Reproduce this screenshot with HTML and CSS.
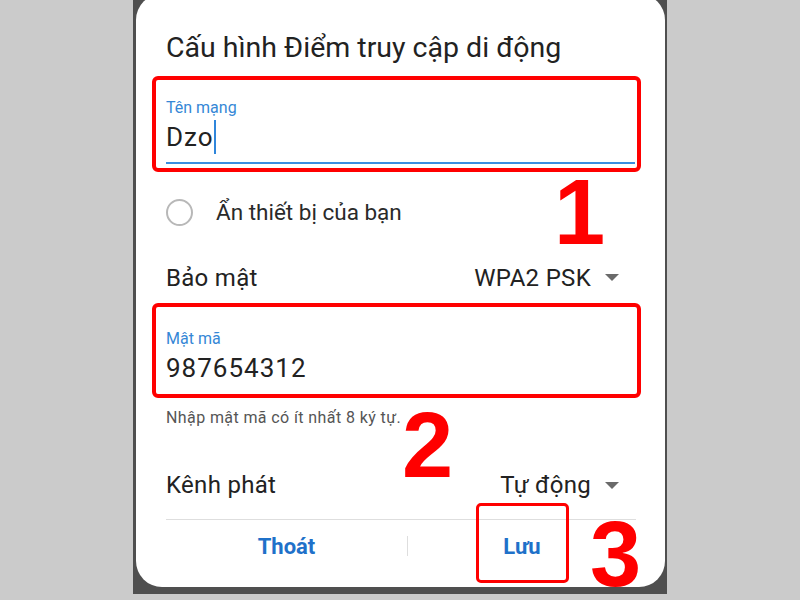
FILE: index.html
```html
<!DOCTYPE html>
<html lang="vi">
<head>
    <meta charset="UTF-8">
    <meta name="viewport" content="width=device-width, initial-scale=1.0">
    <title>Cấu hình Điểm truy cập di động</title>
    <link rel="stylesheet" href="styles.css">
</head>
<body>
    <div class="screen">
        <div class="dialog">
            <h1 class="title">Cấu hình Điểm truy cập di động</h1>

            <div class="field field-name">
                <div class="field-line">
                    <label class="field-label">Tên mạng</label>
                    <div class="field-value">Dzo<span class="cursor"></span></div>
                </div>
            </div>

            <div class="option">
                <span class="radio"></span>
                <span class="option-text">Ẩn thiết bị của bạn</span>
            </div>

            <div class="row row-security">
                <span class="row-label">Bảo mật</span>
                <span class="row-value">WPA2 PSK <span class="caret"></span></span>
            </div>

            <div class="field field-pass">
                <label class="field-label">Mật mã</label>
                <div class="field-value">987654312</div>
            </div>

            <div class="hint">Nhập mật mã có ít nhất 8 ký tự.</div>

            <div class="row row-channel">
                <span class="row-label">Kênh phát</span>
                <span class="row-value">Tự động <span class="caret"></span></span>
            </div>

            <div class="divider"></div>

            <div class="actions">
                <button class="btn btn-cancel">Thoát</button>
                <span class="btn-sep"></span>
                <button class="btn btn-save">Lưu</button>
            </div>

            <!-- annotations drawn over the screenshot -->
            <span class="step step-1">1</span>
            <span class="step step-2">2</span>
            <span class="step step-3">3</span>
            <span class="save-mark"></span>
        </div>
    </div>
</body>
</html>
```

FILE: styles.css
```css
body {
    margin: 0;
    background-color: #cbcbcb;
    font-family: Roboto, "Noto Sans", Arial, sans-serif;
    height: 600px;
    overflow: hidden;
}

.screen {
    width: 529px;
    height: 600px;
    margin: 0 auto;
    padding: 0 2px 0 3px;
    background-color: #4f4f4f;
}

.dialog {
    position: relative;
    margin-top: -6px;
    height: 593px;
    box-sizing: border-box;
    padding: 36px 24px 0 16px;
    background-color: #fff;
    border-radius: 26px;
    color: #222;
}

.title {
    margin: 0;
    padding-left: 14px;
    font-size: 28.5px;
    font-weight: 400;
    line-height: 36px;
    white-space: nowrap;
}

.field {
    border: 4px solid #f00;
    border-radius: 6px;
    padding: 19px 2px 4px 10px;
}

.field-name {
    margin-top: 10px;
}

.field-line {
    border-bottom: 2px solid #3a8ee0;
    padding-bottom: 10px;
}

.field-label {
    display: block;
    font-size: 16px;
    line-height: 18px;
    color: #3587d6;
}

.field-value {
    margin-top: 5px;
    font-size: 26px;
    line-height: 30px;
    letter-spacing: 1px;
    color: #222;
}

.cursor {
    display: inline-block;
    width: 2px;
    height: 34px;
    margin: -2px 0 -2px 0;
    vertical-align: top;
    background-color: #2f86db;
}

.field-pass {
    padding-top: 23px;
    padding-bottom: 11px;
}

.option {
    display: flex;
    align-items: center;
    height: 80px;
    padding-left: 14px;
}

.radio {
    width: 23px;
    height: 23px;
    border: 2px solid #b8b8b8;
    border-radius: 50%;
}

.option-text {
    margin-left: 23px;
    font-size: 22.5px;
    color: #2a2a2a;
}

.row {
    display: flex;
    justify-content: space-between;
    align-items: center;
    padding: 0 22px 0 14px;
    font-size: 24px;
    line-height: 30px;
    letter-spacing: 0.3px;
}

.row-security {
    height: 51px;
}

.row-channel {
    margin-top: 43px;
}

.row-value {
    display: flex;
    align-items: center;
}

.caret {
    width: 0;
    height: 0;
    margin-left: 14px;
    border-left: 7px solid transparent;
    border-right: 7px solid transparent;
    border-top: 7px solid #6a6a6a;
}

.hint {
    margin-top: 11px;
    padding-left: 14px;
    font-size: 16px;
    line-height: 18px;
    letter-spacing: 0.4px;
    color: #555;
}

.divider {
    margin: 19px 5px 0 14px;
    height: 1px;
    background-color: #dedede;
}

.actions {
    display: flex;
    align-items: center;
    height: 52px;
    padding: 0 5px 0 14px;
}

.btn {
    border: none;
    background: none;
    padding: 0;
    font-family: inherit;
    font-size: 22px;
    font-weight: 700;
    color: #1f71c9;
}

.btn-cancel {
    width: 241px;
}

.btn-save {
    flex: 1;
}

.btn-sep {
    width: 1px;
    height: 20px;
    background-color: #dedede;
}

.step {
    position: absolute;
    font-family: "Liberation Sans", Arial, sans-serif;
    font-weight: 700;
    font-size: 92px;
    line-height: 76px;
    color: #f00;
}

.step-1 {
    left: 418px;
    top: 180px;
}

.step-2 {
    left: 266px;
    top: 413px;
}

.step-3 {
    left: 454px;
    top: 522px;
}

.save-mark {
    position: absolute;
    left: 340px;
    top: 509px;
    width: 87px;
    height: 74px;
    border: 3px solid #f00;
    border-radius: 5px;
}
```
